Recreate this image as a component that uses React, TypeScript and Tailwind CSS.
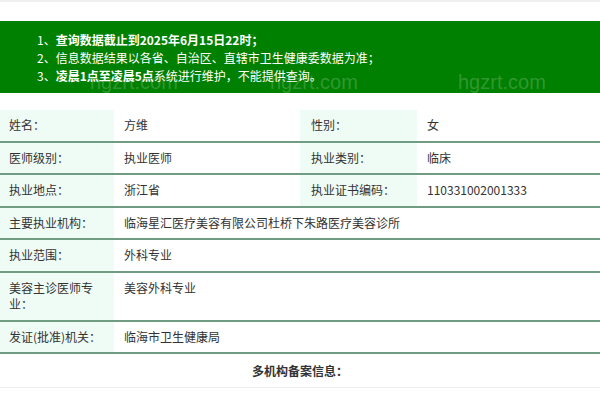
const rows: [string, string, string?, string?][] = [
  ['姓名：', '方维', '性别：', '女'],
  ['医师级别：', '执业医师', '执业类别：', '临床'],
  ['执业地点：', '浙江省', '执业证书编码：', '110331002001333'],
  ['主要执业机构：', '临海星汇医疗美容有限公司杜桥下朱路医疗美容诊所'],
  ['执业范围：', '外科专业'],
  ['美容主诊医师专业：', '美容外科专业'],
  ['发证(批准)机关：', '临海市卫生健康局'],
];

function Watermark({ className }: { className: string }) {
  return (
    <span className={`absolute text-[20px] leading-none text-white/20 font-['Liberation_Sans',Arial,sans-serif] ${className}`}>
      hgzrt.com
    </span>
  );
}

export default function App() {
  return (
    <div className="relative w-[600px] h-[400px] overflow-hidden bg-white font-['Noto_Sans_CJK_SC','Noto_Sans',sans-serif] text-[12px] text-[#333]">
      <div className="h-[2px] bg-[#f0f0f0]" />

      <div className="relative overflow-hidden mt-[19px] h-[72px] bg-[#008000] pl-[37px] pt-[10px] text-white leading-[18px]">
        <p>
          1、<b>查询数据截止到2025年6月15日22时；</b>
        </p>
        <p>2、信息数据结果以各省、自治区、直辖市卫生健康委数据为准；</p>
        <p>
          3、<b>凌晨1点至凌晨5点</b>系统进行维护，不能提供查询。
        </p>
        <Watermark className="left-[90px] top-[51px]" />
        <Watermark className="left-[270px] top-[51px]" />
        <Watermark className="left-[458px] top-[51px]" />
      </div>

      <div className="mt-[17px]">
        {rows.map(([label, value, label2, value2]) => (
          <div key={label} className="flex border-b-2 border-[#6f9c83] leading-[16.5px]">
            <div className="w-[114px] shrink-0 bg-[#effcf5] pl-[9px] pr-[9px] py-[7px]">{label}</div>
            {label2 ? (
              <>
                <div className="w-[186px] shrink-0 pl-[10px] py-[7px]">{value}</div>
                <div className="w-[117px] shrink-0 bg-[#effcf5] pl-[11px] py-[7px]">{label2}</div>
                <div className="flex-1 pl-[10px] py-[7px]">{value2}</div>
              </>
            ) : (
              <div className="flex-1 pl-[10px] py-[7px]">{value}</div>
            )}
          </div>
        ))}
        <div className="h-[34px] flex items-center justify-center border-b border-[#eeeeee] font-bold">
          多机构备案信息：
        </div>
      </div>
    </div>
  );
}
